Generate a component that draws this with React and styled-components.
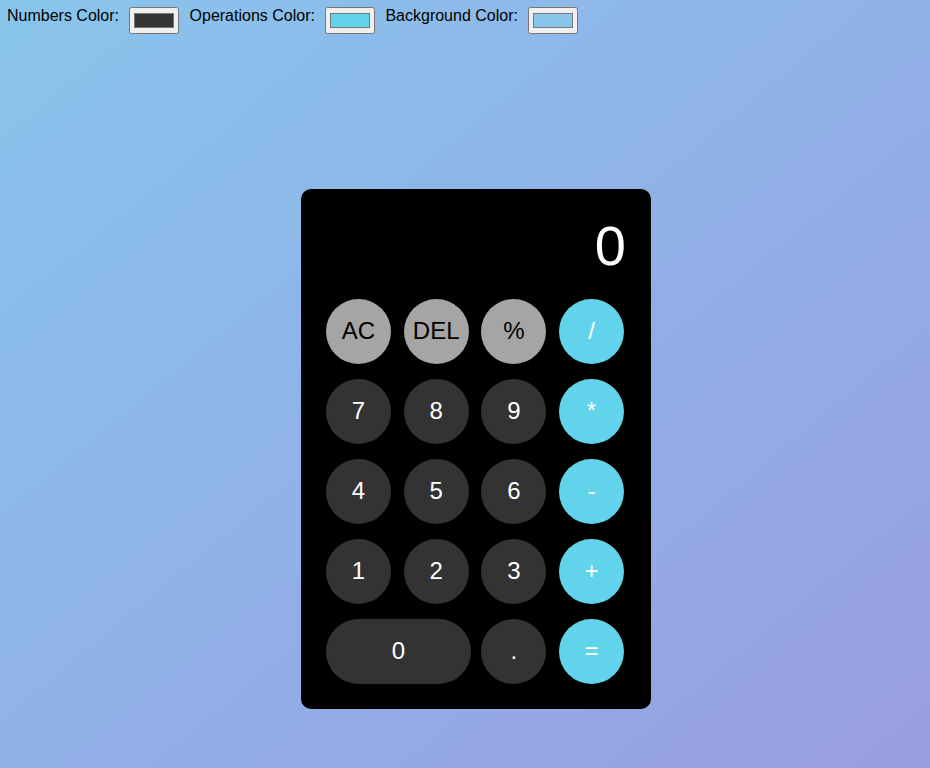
import React, { useState } from "react";
import styled, { createGlobalStyle } from "styled-components";

const GlobalStyle = createGlobalStyle`
    html, body {
        margin: 0;
        padding: 0;
    }
    body {
        font-family: "Liberation Sans", Arial, sans-serif;
        min-height: 100vh;
        background: linear-gradient(to bottom right, #88c5ec, #999de2);
    }
`;

const Page = styled.div`
    min-height: 100vh;
`;

const TopBar = styled.div`
    display: flex;
    align-items: flex-start;
    gap: 10.5px;
    padding: 7px 7px 0;
    height: 27px;
    font-size: 16px;
    color: #000;
`;

const Picker = styled.label`
    display: flex;
    align-items: flex-start;
    gap: 10px;
    line-height: 18px;
    input {
        width: 50px;
        height: 27px;
        margin: 0;
    }
`;

const Main = styled.main`
    display: flex;
    justify-content: center;
    padding: 155px 0 0 22px;
`;

const Calculator = styled.div`
    width: 350px;
    box-sizing: border-box;
    padding: 25px;
    background: #000;
    border-radius: 10px;
`;

const Display = styled.div`
    height: 75px;
    box-sizing: border-box;
    margin-bottom: 10px;
    text-align: right;
    color: #fff;
    font-size: 56px;
    line-height: 64px;
`;

const Keys = styled.div`
    display: grid;
    grid-template-columns: repeat(4, 65px);
    column-gap: 12.67px;
    row-gap: 15px;
`;

const Key = styled.button`
    width: ${(p) => (p.$wide ? "145px" : "65px")};
    height: 65px;
    grid-column: ${(p) => (p.$wide ? "span 2" : "auto")};
    border: none;
    border-radius: 33px;
    padding: 0 0 1px;
    font-family: "Liberation Sans", Arial, sans-serif;
    font-size: 24px;
    cursor: pointer;
    background: ${(p) => p.$bg};
    color: ${(p) => p.$fg};
`;

const keys = [
    ["AC", "fn"], ["DEL", "fn"], ["%", "fn"], ["/", "op"],
    ["7", "num"], ["8", "num"], ["9", "num"], ["*", "op"],
    ["4", "num"], ["5", "num"], ["6", "num"], ["-", "op"],
    ["1", "num"], ["2", "num"], ["3", "num"], ["+", "op"],
    ["0", "num", true], [".", "num"], ["=", "op"],
];

export default function App() {
    const [numColor, setNumColor] = useState("#333333");
    const [opColor, setOpColor] = useState("#61d4ec");
    const [bgColor, setBgColor] = useState("#87c5ea");
    const [value, setValue] = useState("0");

    const press = (k) => {
        if (k === "AC") return setValue("0");
        if (k === "DEL") return setValue(value.length > 1 ? value.slice(0, -1) : "0");
        if (k === "=") {
            try {
                // eslint-disable-next-line no-new-func
                return setValue(String(Function(`return (${value.replace(/%/g, "/100")})`)()));
            } catch (e) {
                return setValue("0");
            }
        }
        setValue(value === "0" && /[0-9]/.test(k) ? k : value + k);
    };

    const colors = (type) => {
        if (type === "fn") return { bg: "#a5a5a5", fg: "#000" };
        if (type === "op") return { bg: opColor, fg: "#fff" };
        return { bg: numColor, fg: "#fff" };
    };

    return (
        <Page>
            <GlobalStyle />
            <TopBar>
                <Picker>
                    Numbers Color:
                    <input type="color" value={numColor} onChange={(e) => setNumColor(e.target.value)} />
                </Picker>
                <Picker>
                    Operations Color:
                    <input type="color" value={opColor} onChange={(e) => setOpColor(e.target.value)} />
                </Picker>
                <Picker>
                    Background Color:
                    <input type="color" value={bgColor} onChange={(e) => setBgColor(e.target.value)} />
                </Picker>
            </TopBar>
            <Main>
                <Calculator>
                    <Display>{value}</Display>
                    <Keys>
                        {keys.map(([k, type, wide]) => {
                            const c = colors(type);
                            return (
                                <Key key={k} $wide={wide} $bg={c.bg} $fg={c.fg} onClick={() => press(k)}>
                                    {k}
                                </Key>
                            );
                        })}
                    </Keys>
                </Calculator>
            </Main>
        </Page>
    );
}
